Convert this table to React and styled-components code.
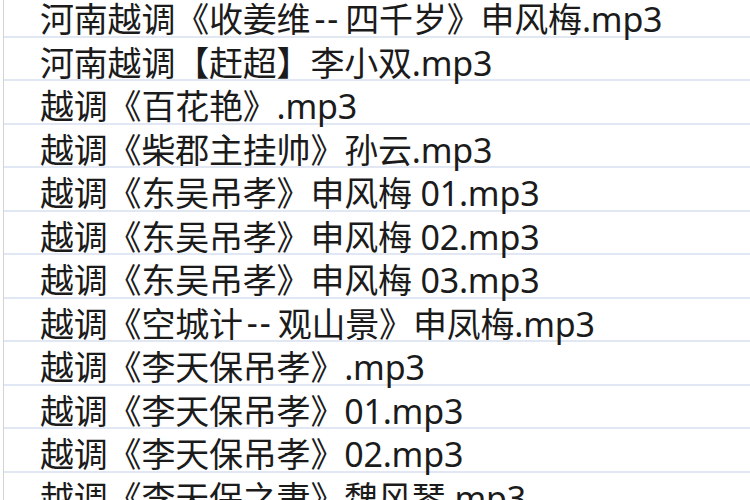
import React from "react";
import styled, { createGlobalStyle } from "styled-components";

const GlobalStyle = createGlobalStyle`
  html, body {
    margin: 0;
    padding: 0;
    background: #ffffff;
    overflow: hidden;
  }
`;

const Sheet = styled.div`
  width: 750px;
  height: 500px;
  overflow: hidden;
  padding-left: 3px;
  box-sizing: border-box;
  background: #fff;
`;

const Column = styled.div`
  border-left: 1px solid #d4d4d4;
  margin-top: -6px;
  display: flex;
  flex-direction: column;
`;

const Row = styled.div`
  height: 43.5px;
  box-sizing: border-box;
  border-bottom: 2px solid #e1e8f4;
  display: flex;
  align-items: center;
  padding-left: 36px;
  padding-top: 6px;
  font-family: "Noto Sans", "Noto Sans CJK SC", sans-serif;
  font-size: 34px;
  color: #1b1b1b;
  white-space: nowrap;
  letter-spacing: -0.2px;
`;

// the reference font draws its hyphens wider, with more room round them
const Dash = styled.span`
  padding: 0 5px 0 4px;
  letter-spacing: 2px;
`;

const files = [
  "河南越调《收姜维--四千岁》申风梅.mp3",
  "河南越调【赶超】李小双.mp3",
  "越调《百花艳》.mp3",
  "越调《柴郡主挂帅》孙云.mp3",
  "越调《东吴吊孝》申风梅 01.mp3",
  "越调《东吴吊孝》申风梅 02.mp3",
  "越调《东吴吊孝》申风梅 03.mp3",
  "越调《空城计--观山景》申凤梅.mp3",
  "越调《李天保吊孝》.mp3",
  "越调《李天保吊孝》01.mp3",
  "越调《李天保吊孝》02.mp3",
  "越调《李天保之妻》魏风琴.mp3",
];

const renderName = name => {
  const parts = name.split("--");
  if (parts.length === 1) return name;
  return (
    <>
      {parts[0]}
      <Dash>--</Dash>
      {parts[1]}
    </>
  );
};

const App = () => {
  return (
    <>
      <GlobalStyle />
      <Sheet>
        <Column>
          {files.map(name => (
            <Row key={name}>{renderName(name)}</Row>
          ))}
        </Column>
      </Sheet>
    </>
  );
};

export default App;
